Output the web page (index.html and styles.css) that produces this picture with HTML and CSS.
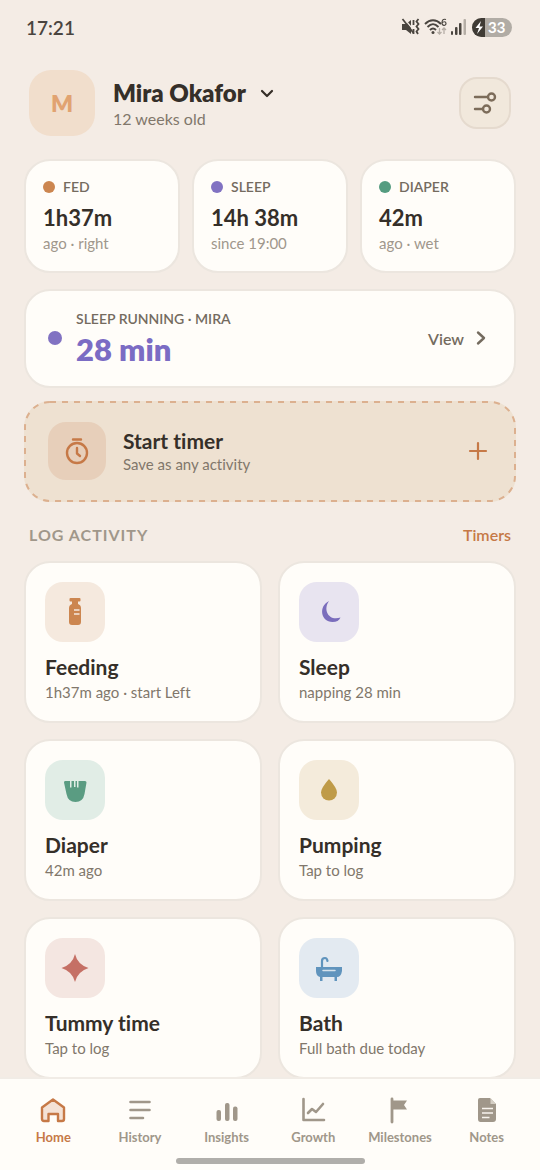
FILE: index.html
```html
<!DOCTYPE html>
<html lang="en">
<head>
<meta charset="utf-8">
<meta name="viewport" content="width=device-width, initial-scale=1">
<title>Mira Okafor</title>
<link rel="stylesheet" href="styles.css">
</head>
<body>
<div class="app">
  <div class="status">
    <span class="status-time">17:21</span>
    <div class="status-icons">
      <svg width="19" height="18" viewBox="0 0 19 18" fill="none" stroke="#4a453f">
        <path d="M1 6h4l5-4v14l-5-4H1z" fill="#4a453f" stroke="none"/>
        <path d="M3 .5l10 12" stroke="#f4ece5" stroke-width="1.200"/>
        <path d="M1.500 1l11 14" stroke-width="1.700"/>
        <path d="M12.500 2v5M12.500 11v5" stroke-width="1.800"/>
        <path d="M17.500 1l-2 2.500 2 2.500-2 2.500 2 2.500-2 2.500 1.500 2.500" stroke-width="1.800"/>
      </svg>
      <svg width="23" height="18" viewBox="0 0 23 18" fill="none" stroke="#4a453f" stroke-width="1.900">
        <path d="M1 6c5-5 11-5 16 0M3.500 9c4-4 7-4 11 0M6 12c2-2 4-2 6 0"/>
        <circle cx="9" cy="14.500" r="1.500" fill="#4a453f" stroke="none"/>
        <path d="M22 1.500c-3-1-4 1-4 3.500 0 3 4 3 4 .5s-3-2-4-.5" stroke-width="1.200"/>
        <path d="M15.500 10v6M13.500 14l2 2 2-2M20 16v-6M18 12l2-2 2 2" stroke="#b5aea6" stroke-width="1.300"/>
      </svg>
      <svg width="16" height="18" viewBox="0 0 16 18" fill="#4a453f">
        <rect x="0" y="13" width="2" height="4" rx="1"/><rect x="4" y="9" width="2.500" height="8" rx="1"/><rect x="8" y="5" width="2.500" height="12" rx="1"/><rect x="12.500" y="1" width="2.500" height="16" rx="1" fill="#b5aea6"/>
      </svg>
      <div class="battery">
        <svg width="13" height="19" viewBox="0 0 13 19"><rect width="13" height="19" fill="#3f3b35"/><path d="M9 3L3.500 10H7l-2 6 6-7.500H7.500z" fill="#fff"/></svg>
        <span>33</span>
      </div>
    </div>
  </div>

  <main class="content">
    <header class="profile">
      <div class="avatar">M</div>
      <div class="profile-text">
        <button class="profile-name" type="button"><h1>Mira Okafor</h1>
          <svg width="14" height="14" viewBox="0 0 14 14" fill="none" stroke="#352e27" stroke-width="2.200" stroke-linecap="round" stroke-linejoin="round"><path d="M2 5l5 5 5-5"/></svg>
        </button>
        <p>12 weeks old</p>
      </div>
      <button class="settings" type="button" aria-label="Settings">
        <svg width="26" height="26" viewBox="0 0 26 26" fill="none" stroke="#7c6c5a" stroke-width="2.400" stroke-linecap="round"><path d="M3 7h12M3 19h7"/><circle cx="19.500" cy="7" r="3.500"/><circle cx="14.500" cy="19" r="3.500"/></svg>
      </button>
    </header>

    <section class="stats">
      <article class="stat card"><h2><i class="dot orange"></i>FED</h2><strong>1h37m</strong><p>ago · right</p></article>
      <article class="stat card"><h2><i class="dot purple"></i>SLEEP</h2><strong>14h 38m</strong><p>since 19:00</p></article>
      <article class="stat card"><h2><i class="dot green"></i>DIAPER</h2><strong>42m</strong><p>ago · wet</p></article>
    </section>

    <section class="running card">
      <i class="dot dot-large purple"></i>
      <div class="running-text"><h2>SLEEP RUNNING · MIRA</h2><strong>28 min</strong></div>
      <button class="view" type="button">View
        <svg width="14" height="16" viewBox="0 0 14 16" fill="none" stroke="#746b5f" stroke-width="2.400" stroke-linecap="round" stroke-linejoin="round"><path d="M4 2.500l6 5.500-6 5.500"/></svg>
      </button>
    </section>

    <button class="timer" type="button">
      <svg class="timer-outline" aria-hidden="true"><rect x="1" y="1" rx="25"/></svg>
      <span class="timer-icon">
        <svg width="28" height="28" viewBox="0 0 28 28" fill="none" stroke="#c67947" stroke-width="2.400" stroke-linecap="round" stroke-linejoin="round"><circle cx="14" cy="16" r="10"/><path d="M10 2.500h8M14 11v5.500l3 2.500"/></svg>
      </span>
      <span class="timer-text"><b>Start timer</b><span>Save as any activity</span></span>
      <svg width="20" height="20" viewBox="0 0 20 20" stroke="#c67947" stroke-width="2.200" stroke-linecap="round"><path d="M10 2v16M2 10h16"/></svg>
    </button>

    <div class="section-head"><h2>LOG ACTIVITY</h2><a href="#timers">Timers</a></div>

    <section class="grid">
      <button class="activity card" type="button">
        <span class="tile tile-orange"><svg width="32" height="32" viewBox="0 0 32 32"><path d="M11.500 2h9a1 1 0 0 1 1 1v1.500a1 1 0 0 1-1 1H19v2.500q3 1 3 4V26q0 3-3 3h-6q-3 0-3-3V12q0-3 3-4V5.500h-1.500a1 1 0 0 1-1-1V3a1 1 0 0 1 1-1z" fill="#cc8650"/><path d="M15 14h5.500M15 18h5.500" stroke="#f5e9de" stroke-width="1.600"/></svg></span>
        <b>Feeding</b><span class="sub">1h37m ago · start Left</span>
      </button>
      <button class="activity card" type="button">
        <span class="tile tile-purple"><svg width="32" height="32" viewBox="0 0 32 32"><path d="M16 5C5 10.500 8 26 19.500 26q6 0 8-4.500C16 25.500 9.500 14 16 5z" fill="#7a6dbc"/></svg></span>
        <b>Sleep</b><span class="sub">napping 28 min</span>
      </button>
      <button class="activity card" type="button">
        <span class="tile tile-green"><svg width="32" height="32" viewBox="0 0 32 32"><path d="M6 7h5v6.500h1.500V7h2.500v6h1.500V7H18v6.500h1.500V7h6.500q1.500 0 1.500 1.500L25.500 20q-1.500 8-9 8t-9-8L5 8.500Q5 7 6 7z" fill="#5a9c82"/></svg></span>
        <b>Diaper</b><span class="sub">42m ago</span>
      </button>
      <button class="activity card" type="button">
        <span class="tile tile-gold"><svg width="32" height="32" viewBox="0 0 32 32"><path d="M16 5q-8 9-8 13.500a8 8 0 0 0 16 0Q24 14 16 5z" fill="#bf9b48"/></svg></span>
        <b>Pumping</b><span class="sub">Tap to log</span>
      </button>
      <button class="activity card" type="button">
        <span class="tile tile-red"><svg width="32" height="32" viewBox="0 0 32 32"><path d="M16 2q2.500 10.500 13.500 14Q18.500 19.500 16 30 13.500 19.500 2.500 16 13.500 12.500 16 2z" fill="#c57065"/></svg></span>
        <b>Tummy time</b><span class="sub">Tap to log</span>
      </button>
      <button class="activity card" type="button">
        <span class="tile tile-blue"><svg width="32" height="32" viewBox="0 0 32 32"><path d="M9 16V9q0-3 3-3 2 0 2.500 3" fill="none" stroke="#6094bd" stroke-width="2.200" stroke-linecap="round"/><path d="M3 15h26v4q-1 6-5 6v4h-2.500v-4h-12v4H7v-4q-4-1-4-6z" fill="#6094bd"/><path d="M10 18.500h12" stroke="#d5e2ec" stroke-width="1.500" stroke-linecap="round"/></svg></span>
        <b>Bath</b><span class="sub">Full bath due today</span>
      </button>
    </section>
  </main>

  <nav class="tabs">
    <a class="tab active" href="#home"><svg width="28" height="28" viewBox="0 0 28 28" fill="#f4e2d6" stroke="#c67947" stroke-width="2.400" stroke-linejoin="round"><path d="M3 11.500L14 3.500l11 8V23q0 2-2 2h-4v-7H9.500v7H5q-2 0-2-2z"/></svg>Home</a>
    <a class="tab" href="#history"><svg width="28" height="28" viewBox="0 0 28 28" fill="none" stroke="#a0978a" stroke-width="2.600" stroke-linecap="round"><path d="M4.500 6h19M4.500 14h19M4.500 22h12.500"/></svg>History</a>
    <a class="tab" href="#insights"><svg width="28" height="28" viewBox="0 0 28 28" fill="#a0978a"><rect x="3.500" y="14" width="4.500" height="11" rx="2"/><rect x="12" y="7" width="4.500" height="18" rx="2"/><rect x="20" y="10.500" width="4.500" height="14.500" rx="2"/></svg>Insights</a>
    <a class="tab" href="#growth"><svg width="28" height="28" viewBox="0 0 28 28" fill="none" stroke="#a0978a" stroke-width="2.600" stroke-linecap="round" stroke-linejoin="round"><path d="M4.500 3v21H25M9 17l4-4 4 3 7-8"/></svg>Growth</a>
    <a class="tab" href="#milestones"><svg width="28" height="28" viewBox="0 0 28 28"><path d="M6 3v23" stroke="#a0978a" stroke-width="2.800" stroke-linecap="round"/><path d="M7 4.500h14l-3 4.500 3 4.500H7z" fill="#a0978a"/></svg>Milestones</a>
    <a class="tab" href="#notes"><svg width="28" height="28" viewBox="0 0 28 28"><path d="M7 2h10l6 6v15q0 3-3 3H7.500q-2.500 0-2.500-3V4q0-2 2-2z" fill="#a0978a"/><path d="M17.500 2v6H23z" fill="#d5cfc5"/><path d="M9 12.500h11M9 17h11M9 21.500h7.500" stroke="#f8f4ee" stroke-width="1.500"/></svg>Notes</a>
  </nav>
  <div class="home-indicator"></div>
</div>
</body>
</html>
```
FILE: styles.css
```css
* { box-sizing: border-box; }
body {
  margin: 0;
  background: #f4ece5;
  color: #352f29;
  font-family: Lato, "Open Sans", sans-serif;
  font-variant-ligatures: none;
}
h1, h2, p { margin: 0; }
button {
  border: 0;
  background: none;
  padding: 0;
  font: inherit;
  font-variant-ligatures: none;
  color: inherit;
  text-align: left;
  cursor: pointer;
}
a { text-decoration: none; }
svg { display: block; flex: none; }

.app {
  height: 100vh;
  display: flex;
  flex-direction: column;
}

.status {
  flex: none;
  height: 54px;
  padding: 0 28px 0 26px;
  display: flex;
  align-items: center;
  justify-content: space-between;
  color: #4a453f;
}
.status-time { font-size: 19px; font-weight: 600; }
.status-icons { display: flex; align-items: center; gap: 4px; }
.battery {
  display: flex;
  align-items: center;
  gap: 3px;
  width: 40px;
  height: 19px;
  margin-left: 1px;
  border-radius: 10px;
  overflow: hidden;
  background: #b1aca5;
  color: #fff;
  font-size: 15px;
  font-weight: 700;
}

.content {
  flex: 1;
  min-height: 0;
  overflow-y: auto;
  scrollbar-width: none;
  padding: 16px 24px 24px;
}

.profile {
  display: flex;
  align-items: center;
  gap: 18px;
  padding: 0 5px;
}
.avatar {
  width: 66px;
  height: 66px;
  border-radius: 22px;
  background: #f1decc;
  color: #e1a371;
  display: grid;
  place-items: center;
  font-size: 23px;
  font-weight: 800;
}
.profile-text { flex: 1; }
.profile-text p { font-size: 16px; line-height: 20px; color: #81776b; }
.profile-name { display: flex; align-items: center; gap: 14px; }
.profile-name h1 { font-size: 24px; line-height: 32px; font-weight: 800; }
.settings {
  width: 52px;
  height: 52px;
  border: 2px solid #e5dace;
  border-radius: 18px;
  background: #f1e8dc;
  display: grid;
  place-items: center;
}

.card {
  background: #fffdf9;
  border: 2px solid #ece6df;
  border-radius: 26px;
}

.dot {
  flex: none;
  width: 12px;
  height: 12px;
  border-radius: 50%;
}
.dot-large { width: 14px; height: 14px; }
.orange { background: #cc8650; }
.purple { background: #8172c2; }
.green { background: #559c80; }

.stats {
  display: grid;
  grid-template-columns: repeat(3, 1fr);
  gap: 12px;
  margin-top: 23px;
}
.stat { padding: 16px 17px 17px; }
.stat h2 {
  display: flex;
  align-items: center;
  gap: 8px;
  font-size: 14px;
  line-height: 20px;
  font-weight: 600;
  color: #746b5f;
}
.stat strong { display: block; margin-top: 7px; font-size: 22px; line-height: 28px; font-weight: 700; }
.stat p { margin-top: 1px; font-size: 15px; line-height: 21px; color: #a0978c; }

.running {
  display: flex;
  align-items: center;
  gap: 14px;
  margin-top: 16px;
  padding: 17px 26px 18px 22px;
}
.running-text { flex: 1; }
.running-text h2 { font-size: 14px; line-height: 22px; font-weight: 600; color: #746b5f; }
.running-text strong { display: block; font-size: 31px; line-height: 38px; font-weight: 800; color: #7b6cc4; }
.view {
  display: flex;
  align-items: center;
  gap: 10px;
  font-size: 16px;
  font-weight: 600;
  color: #746b5f;
}

.timer {
  position: relative;
  display: flex;
  align-items: center;
  gap: 17px;
  width: 100%;
  margin-top: 13px;
  padding: 21px 28px 22px 24px;
  border-radius: 26px;
  background: #eee1d1;
}
.timer-outline {
  position: absolute;
  inset: 0;
  width: 100%;
  height: 100%;
}
.timer-outline rect {
  width: calc(100% - 2px);
  height: calc(100% - 2px);
  fill: none;
  stroke: #dcb08f;
  stroke-width: 2px;
  stroke-dasharray: 6 6;
}
.timer-icon {
  width: 58px;
  height: 58px;
  border-radius: 18px;
  background: #e7cfba;
  display: grid;
  place-items: center;
}
.timer-text { flex: 1; font-size: 15px; line-height: 20px; color: #81776b; }
.timer-text b { display: block; font-size: 21px; line-height: 26px; color: #352f29; }
.timer-text span { display: block; }

.section-head {
  display: flex;
  align-items: center;
  justify-content: space-between;
  margin-top: 21px;
  padding: 0 5px;
  line-height: 24px;
}
.section-head h2 { font-size: 16px; font-weight: 700; letter-spacing: 1px; color: #a0978a; }
.section-head a { font-size: 16px; font-weight: 600; color: #c67947; }

.grid {
  display: grid;
  grid-template-columns: repeat(2, 1fr);
  gap: 16px;
  margin-top: 14px;
}
.activity {
  display: flex;
  flex-direction: column;
  align-items: flex-start;
  padding: 19px 19px 18px;
}
.activity b { margin-top: 11px; font-size: 21px; line-height: 28px; }
.activity .sub { font-size: 15px; line-height: 22px; color: #81776b; }
.tile {
  width: 60px;
  height: 60px;
  border-radius: 18px;
  display: grid;
  place-items: center;
}
.tile-orange { background: #f5e9de; }
.tile-purple { background: #e8e4f0; }
.tile-green { background: #e1ede6; }
.tile-gold { background: #f4ebdb; }
.tile-red { background: #f4e6e1; }
.tile-blue { background: #e3eaf1; }

.tabs {
  flex: none;
  display: grid;
  grid-template-columns: repeat(6, 1fr);
  padding: 17px 10px 12px;
  border-top: 2px solid #f1ece6;
  background: #fffdf9;
}
.tab {
  display: flex;
  flex-direction: column;
  align-items: center;
  gap: 4px;
  font-size: 13px;
  line-height: 18px;
  font-weight: 700;
  color: #a0978a;
}
.tab.active { color: #c67947; }
.home-indicator {
  flex: none;
  height: 12px;
  background: #fffdf9;
}
.home-indicator::before {
  content: "";
  display: block;
  width: 35%;
  height: 6px;
  margin: 0 auto;
  border-radius: 3px;
  background: #b0aeaa;
}
```
